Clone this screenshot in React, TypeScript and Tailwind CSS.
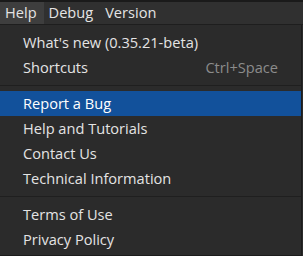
import React from "react";

type Item = { label: string; shortcut?: string; active?: boolean };

const GROUPS: Item[][] = [
  [{ label: "What's new (0.35.21-beta)" }, { label: "Shortcuts", shortcut: "Ctrl+Space" }],
  [
    { label: "Report a Bug", active: true },
    { label: "Help and Tutorials" },
    { label: "Contact Us" },
    { label: "Technical Information" },
  ],
  [{ label: "Terms of Use" }, { label: "Privacy Policy" }],
];

const MENUS = ["Help", "Debug", "Version"];

export default function App() {
  return (
    <div
      className="w-[303px] h-[256px] bg-[#2b2b2b] text-[#e4e4e4] text-[14.6px] overflow-hidden flex flex-col"
      style={{ fontFamily: '"Open Sans", "Noto Sans", sans-serif' }}
    >
      <div className="h-[2px] bg-[#1a1a1a]" />
      <div className="h-[23px] bg-[#303030] flex items-stretch border-b border-[#1e1e1e]">
        {MENUS.map((m, i) => (
          <div
            key={m}
            className={`pl-[5px] pr-[7px] flex items-center ${i === 0 ? "bg-[#3e3e3e]" : ""}`}
          >
            {m}
          </div>
        ))}
      </div>
      <div className="flex-1 mr-[1px] border-r border-b border-[#1c1c1c] pt-[5px] flex flex-col">
        {GROUPS.map((g, gi) => (
          <div key={gi}>
            {gi > 0 && (
              <div className="py-[5px]">
                <div className="h-[1px] bg-[#1f1f1f]" />
              </div>
            )}
            {g.map((it) => (
              <div
                key={it.label}
                className={`h-[25px] pl-[23px] pr-[23px] flex items-center justify-between ${
                  it.active ? "bg-[#12519b] text-white" : ""
                }`}
              >
                <span>{it.label}</span>
                {it.shortcut && <span className="text-[#8c8c8c]">{it.shortcut}</span>}
              </div>
            ))}
          </div>
        ))}
      </div>
    </div>
  );
}
